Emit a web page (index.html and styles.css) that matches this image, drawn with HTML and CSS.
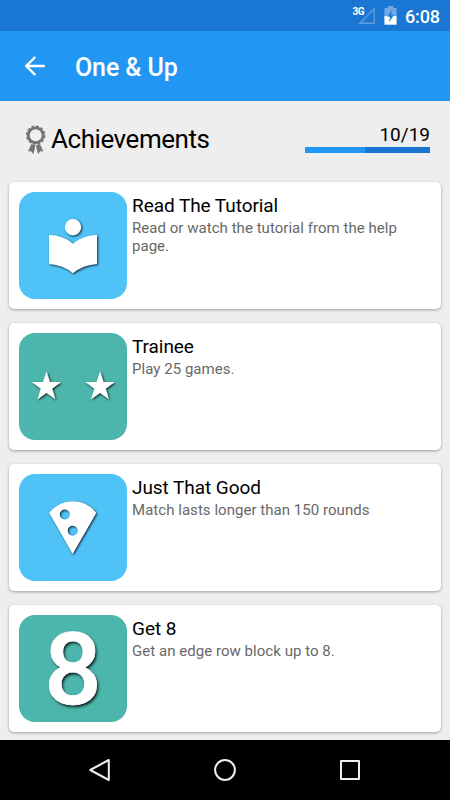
FILE: index.html
```html
<!DOCTYPE html>
<html lang="en">
<head>
<meta charset="utf-8">
<title>One &amp; Up</title>
<link rel="stylesheet" href="styles.css">
</head>
<body>
<div class="status">
  <span class="network">3G</span>
  <svg class="signal" width="18" height="18" viewBox="0 0 18 18"><path d="M16.2 1.8V16.2H1.8Z" fill="none" stroke="#5f9fe0" stroke-width="1.4"/></svg>
  <svg class="battery" width="13" height="19" viewBox="0 0 13 19"><path d="M3.7 0h5.6v2H12.6v8H.4V2h3.3z" fill="#70a9e4"/><path d="M.4 10h12.2v8.7H.4z" fill="#fff"/><path d="M8.2 4 3.3 10.8h2.9L4.9 16l5-6.7H7z" fill="#1976d2"/></svg>
  <span class="clock">6:08</span>
</div>
<header class="toolbar">
  <svg width="20" height="20" viewBox="0 0 20 20"><path d="M19.8 10H1.8M10.3 1 1.3 10l9 9" fill="none" stroke="#fff" stroke-width="2.4"/></svg>
  <h1>One &amp; Up</h1>
</header>
<main>
  <section class="summary">
    <svg class="medal" width="22" height="30" viewBox="0 0 22 30">
      <circle cx="10.7" cy="10.2" r="7.4" fill="none" stroke="#757575" stroke-width="2.8"/>
      <circle cx="10.7" cy="10.2" r="8.9" fill="none" stroke="#757575" stroke-width="1.7" stroke-dasharray="2.8 1.86"/>
      <path d="M6.4 19 3 26.6l3.2-.3 2.2 2.9L10.4 20.4zM15 19l3.4 7.6-3.2-.3-2.2 2.9L11 20.4z" fill="#757575"/>
    </svg>
    <h2>Achievements</h2>
    <div class="progress"><span>10/19</span><div class="bar"><div class="done"></div></div></div>
  </section>
  <article class="card">
    <div class="tile blue"><svg class="art" viewBox="0 0 108 108"><circle cx="54" cy="35.3" r="8.2"/><path d="M30 43q14 0 24 8.7Q64 43 78 43v29q-14 1-24 9.2Q44 73 30 72z"/></svg></div>
    <div class="copy"><h3>Read The Tutorial</h3><p>Read or watch the tutorial from the help page.</p></div>
  </article>
  <article class="card">
    <div class="tile teal"><svg class="art" viewBox="0 0 108 108"><path id="star" d="m27.5 38.3 3.6 10.6 11.2.1-9 6.7 3.3 10.8-9.1-6.6-9.1 6.6 3.3-10.8-9-6.7 11.2-.1z"/><use href="#star" x="53.6"/></svg></div>
    <div class="copy"><h3>Trainee</h3><p>Play 25 games.</p></div>
  </article>
  <article class="card">
    <div class="tile blue"><svg class="art" viewBox="0 0 108 108"><path fill-rule="evenodd" d="M30.2 39Q39 27.5 53.7 27.3 69 27.5 77.3 39L53.7 80zM50.8 40.5a5 5 0 1 0-10 0 5 5 0 1 0 10 0M58.7 56.7a5 5 0 1 0-10 0 5 5 0 1 0 10 0"/></svg></div>
    <div class="copy"><h3>Just That Good</h3><p>Match lasts longer than 150 rounds</p></div>
  </article>
  <article class="card">
    <div class="tile teal"><span class="digit">8</span></div>
    <div class="copy"><h3>Get 8</h3><p>Get an edge row block up to 8.</p></div>
  </article>
</main>
<nav>
  <svg viewBox="0 0 24 24"><path d="M20.8 2v20L2.2 12z"/></svg>
  <svg viewBox="0 0 24 24"><circle cx="12" cy="12" r="9.9"/></svg>
  <svg viewBox="0 0 24 24"><path d="M3 3h18v18H3z"/></svg>
</nav>
</body>
</html>
```
FILE: styles.css
```css
* { box-sizing: border-box; }
body { margin: 0; width: 450px; height: 800px; overflow: hidden; display: flex; flex-direction: column; background: #eee; color: #000; font-family: Roboto, sans-serif; }
h1, h2, h3, p { margin: 0; font-weight: 400; }
svg { display: block; flex: none; }
.status { height: 31px; flex: none; display: flex; justify-content: flex-end; background: #1976d2; color: #fff; padding-right: 10px; }
.network { font-size: 10px; font-weight: 700; line-height: 12px; margin-top: 6px; letter-spacing: -.5px; }
.signal { margin: 7px 0 0 -6px; }
.battery { margin: 6px 0 0 8px; }
.clock { font-size: 18px; font-weight: 500; line-height: 22px; margin: 6px 0 0 8px; letter-spacing: -.1px; }
.toolbar { height: 70px; flex: none; display: flex; align-items: center; background: #2196f3; color: #fff; padding-left: 25px; gap: 30px; }
.toolbar h1 { font-size: 25px; font-weight: 500; line-height: 30px; padding-top: 3px; letter-spacing: -.1px; }
.toolbar svg { margin-top: -1px; }
main { flex: 1; min-height: 0; }
.summary { height: 81px; display: flex; padding: 24px 20px 0 25px; }
.summary h2 { font-size: 26px; line-height: 30px; margin: -1px 0 0 4px; letter-spacing: -.45px; }
.progress { width: 125px; margin-left: auto; text-align: right; font-size: 19px; line-height: 22px; margin-top: -1px; }
.bar { height: 6px; background: #1976d2; margin-top: 1px; }
.done { width: 60px; height: 6px; background: #2196f3; }
.card { width: 432px; height: 127px; margin: 0 0 14px 9px; display: flex; gap: 5px; padding: 10px; border-radius: 5px; background: #fff; box-shadow: 0 1px 3px rgba(0,0,0,.35); }
.tile { width: 108px; height: 107px; flex: none; border-radius: 16px; display: flex; justify-content: center; }
.blue { background: #4fc3f7; }
.teal { background: #4db6ac; }
.art { width: 108px; height: 108px; fill: #fff; filter: drop-shadow(1.5px 1.5px 1.3px rgba(0,0,0,.8)); }
.digit { font-size: 101px; font-weight: 500; line-height: 109px; color: #fff; -webkit-text-stroke: .8px #fff; text-shadow: 1.5px 1.5px 3px rgba(0,0,0,.9); }
.copy { width: 290px; padding-top: 2px; }
.copy h3 { font-size: 19px; line-height: 24px; letter-spacing: -.06px; }
.copy p { font-size: 15px; line-height: 18px; color: #686868; margin-top: 1px; letter-spacing: .04px; }
nav { height: 60px; flex: none; display: flex; justify-content: center; align-items: center; gap: 101px; background: #000; }
nav svg { width: 24px; height: 24px; fill: none; stroke: #eee; stroke-width: 2; stroke-linejoin: round; }
```
